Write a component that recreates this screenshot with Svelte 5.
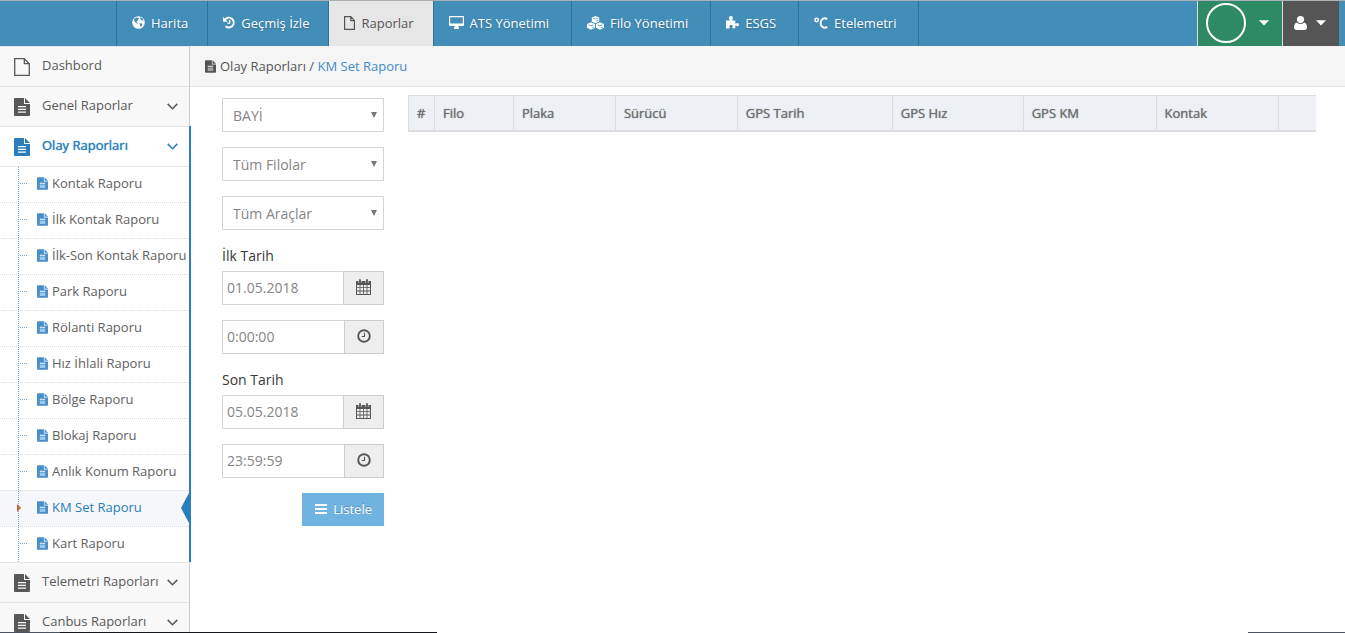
<script lang="ts">
  const navItems = [
    { icon: 'globe', label: 'Harita' },
    { icon: 'history', label: 'Geçmiş İzle' },
    { icon: 'file', label: 'Raporlar', active: true },
    { icon: 'desktop', label: 'ATS Yönetimi', wide: true },
    { icon: 'cubes', label: 'Filo Yönetimi', wide: true },
    { icon: 'puzzle', label: 'ESGS', wide: true },
    { icon: 'celsius', label: 'Etelemetri', wide: true },
  ];

  const reports = [
    'Kontak Raporu',
    'İlk Kontak Raporu',
    'İlk-Son Kontak Raporu',
    'Park Raporu',
    'Rölanti Raporu',
    'Hız İhlali Raporu',
    'Bölge Raporu',
    'Blokaj Raporu',
    'Anlık Konum Raporu',
    'KM Set Raporu',
    'Kart Raporu',
  ];
  const currentReport = 'KM Set Raporu';

  const columns = [
    { title: '#', weight: 26 },
    { title: 'Filo', weight: 79 },
    { title: 'Plaka', weight: 102 },
    { title: 'Sürücü', weight: 122 },
    { title: 'GPS Tarih', weight: 155 },
    { title: 'GPS Hız', weight: 131 },
    { title: 'GPS KM', weight: 133 },
    { title: 'Kontak', weight: 123 },
    { title: '', weight: 37 },
  ];
  const totalWeight = columns.reduce((sum, c) => sum + c.weight, 0);

  let startDate = $state('01.05.2018');
  let startTime = $state('0:00:00');
  let endDate = $state('05.05.2018');
  let endTime = $state('23:59:59');
</script>

{#snippet fileText()}
  <svg class="file-text" viewBox="0 0 16 18" aria-hidden="true">
    <path fill="currentColor" fill-rule="evenodd" d="M1 0h9v6h6v11a1 1 0 0 1-1 1H1a1 1 0 0 1-1-1V1a1 1 0 0 1 1-1zM4 8v1.300h8V8zM4 10.700V12h8v-1.300zM4 13.400v1.300h8v-1.300z" />
    <path fill="currentColor" d="M11 0l5 5h-5z" />
  </svg>
{/snippet}

{#snippet fileEmpty()}
  <svg class="file-empty" viewBox="0 0 16 18" fill="none" stroke="currentColor" stroke-width="1.300" aria-hidden="true">
    <path d="M.7.7h9.600l5 5v11.600H.7zM10.300.7v5h5" />
  </svg>
{/snippet}

{#snippet chevron()}
  <svg class="chevron" viewBox="0 0 11 7" fill="none" stroke="currentColor" stroke-width="1.500" aria-hidden="true">
    <path d="M.7.9l4.800 4.800L10.300.9" />
  </svg>
{/snippet}

{#snippet caret()}
  <svg class="caret" viewBox="0 0 10 6" aria-hidden="true"><path fill="currentColor" d="M0 .3h10L5 5.600z" /></svg>
{/snippet}

{#snippet calendar()}
  <svg class="calendar" viewBox="0 0 15 16" aria-hidden="true">
    <path fill="currentColor" fill-rule="evenodd" d="M0 2h15v14H0zM1 6v2.300h2.600V6zM4.400 6v2.300h2.700V6zM7.900 6v2.300h2.700V6zM11.400 6v2.300H14V6zM1 9.100v2.500h2.600V9.100zM4.400 9.100v2.500h2.700V9.100zM7.900 9.100v2.500h2.700V9.100zM11.400 9.100v2.500H14V9.100zM1 12.400V15h2.600v-2.600zM4.400 12.400V15h2.700v-2.600zM7.900 12.400V15h2.700v-2.600zM11.400 12.400V15H14v-2.600z" />
    <path d="M4 1v3M11 1v3" stroke="#eee" stroke-width="3" />
    <path d="M4 1v3M11 1v3" stroke="currentColor" stroke-width="1.800" stroke-linecap="round" />
  </svg>
{/snippet}

{#snippet clock()}
  <svg class="clock" viewBox="0 0 14 14" fill="none" stroke="currentColor" aria-hidden="true">
    <circle cx="7" cy="7" r="5.800" stroke-width="1.900" />
    <path d="M7.500 3.800v3.700H4.800" stroke-width="1.100" />
  </svg>
{/snippet}

{#snippet navIcon(name: string)}
  {#if name === 'globe'}
    <svg width="13" height="13" viewBox="0 0 13 13" aria-hidden="true">
      <circle cx="6.500" cy="6.500" r="6.300" fill="#fff" />
      <path fill="#438eb9" d="M2.200 2.700l2.300-1.200 1.700.3.800 1-1.100.6.500.9-1.400.6-.6 1.100.8.700 1 .4-.3.700-1.300-.5-1.500-1.300-.9-1.500zM8.200 1.200l2.200 1.100 1.300 2.200-.8.300-1.300-.6-.9-.8-.6-1zM7.300 7.600l1.900-.4 1.300.9-.6 1.500-1.200 1.300-.6-1.300z" />
    </svg>
  {:else if name === 'history'}
    <svg width="12" height="13" viewBox="0 0 12 13" fill="none" stroke="#fff" aria-hidden="true">
      <path d="M1.900 3.700A4.900 4.900 0 1 1 2.600 10.200" stroke-width="1.900" />
      <path fill="#fff" stroke="none" d="M0 .9v4.800h4.800z" />
      <path d="M6.700 4v3.200H4.400" stroke-width="1.200" />
    </svg>
  {:else if name === 'file'}
    <svg width="11" height="14" viewBox="0 0 11 14" fill="none" stroke="currentColor" stroke-width="1.200" aria-hidden="true">
      <path d="M.6.6h6.200l3.600 3.800v9H.6zM6.800.6v4h3.600" />
    </svg>
  {:else if name === 'desktop'}
    <svg width="15" height="13" viewBox="0 0 15 13" aria-hidden="true">
      <path fill="#fff" fill-rule="evenodd" d="M1 0h13a1 1 0 0 1 1 1v8a1 1 0 0 1-1 1H9.200l.8 2v1H5v-1l.8-2H1a1 1 0 0 1-1-1V1a1 1 0 0 1 1-1zM1.200 1.200v6.400h12.600V1.200z" />
    </svg>
  {:else if name === 'cubes'}
    <svg width="17" height="14" viewBox="0 0 17 14" aria-hidden="true">
      <path fill="#fff" d="M8.500 0l3.700 1.500v4L8.500 7.200 4.800 5.500v-4zM4 6.300l4 1.800v3.700L4 13.800 0 11.800V8.100zM13 6.300l4 1.800v3.700l-4 2-4-2V8.100z" />
      <path fill="none" stroke="#438eb9" stroke-width=".8" d="M6.200 2.200l2.300 1 2.300-1M9.300 5.300l2-1M1.600 8.800L4 9.900l2.400-1.100M4.900 12l2-1M10.600 8.800L13 9.900l2.400-1.100M13.900 12l2-1" />
    </svg>
  {:else if name === 'puzzle'}
    <svg width="13" height="13" viewBox="0 0 13 13" aria-hidden="true">
      <path fill="#fff" d="M0 4.500h3.700c.5-1-.7-1.300-.7-2.600a1.900 1.900 0 0 1 3.800 0c0 1.300-1 1.600-.6 2.600h3.100v3.200c.8.600 1-.7 2.100-.7a1.600 1.600 0 0 1 0 3.200c-1.100 0-1.300-1-2.100-.6v2.700H6.200c-.5-.9.500-1 .5-2s-.7-1.400-1.700-1.400-1.700.5-1.700 1.400.8 1.200.5 2L0 12.600z" />
    </svg>
  {:else}
    <svg width="14" height="12" viewBox="0 0 14 12" fill="none" stroke="#fff" aria-hidden="true">
      <circle cx="2.600" cy="3" r="1.700" stroke-width="1.500" />
      <path d="M13.300 2C9.600.1 6.600 2.500 6.600 6s3 5.900 6.700 4" stroke-width="2" />
    </svg>
  {/if}
{/snippet}

<div class="page">
  <header class="navbar">
    <nav class="nav" aria-label="Ana menü">
      {#each navItems as item}
        <a href="#{item.icon}" class="nav-link" class:active={item.active} class:wide={item.wide}>
          {@render navIcon(item.icon)}
          <span>{item.label}</span>
        </a>
      {/each}
    </nav>
    <div class="tools">
      <button class="company" aria-label="Firma">
        <span class="avatar"></span>
        {@render caret()}
      </button>
      <button class="user" aria-label="Kullanıcı">
        <svg width="13" height="14" viewBox="0 0 13 14" aria-hidden="true">
          <path fill="#fff" d="M6.500 0a3.600 3.600 0 0 1 3.600 3.600c0 2-1.600 3.700-3.600 3.700S2.900 5.600 2.900 3.600A3.600 3.600 0 0 1 6.500 0zM3 6.600c2 2 5 2 7 0 2 .3 3 2.400 3 4.900C13 13 12 14 10.600 14H2.400C1 14 0 13 0 11.500 0 9 1 6.900 3 6.600z" />
        </svg>
        {@render caret()}
      </button>
    </div>
  </header>

  <div class="body">
    <aside class="sidebar">
      <a href="#dashboard" class="menu-item">{@render fileEmpty()}<span>Dashbord</span></a>
      <a href="#genel" class="menu-item">{@render fileText()}<span>Genel Raporlar</span>{@render chevron()}</a>
      <div class="open-group">
        <a href="#olay" class="menu-item open">{@render fileText()}<span>Olay Raporları</span>{@render chevron()}</a>
        <ul class="submenu">
          {#each reports as report}
            <li class:current={report === currentReport}>
              <a href="#rapor">{@render fileText()}<span>{report}</span></a>
            </li>
          {/each}
        </ul>
      </div>
      <a href="#telemetri" class="menu-item">{@render fileText()}<span>Telemetri Raporları</span>{@render chevron()}</a>
      <a href="#canbus" class="menu-item">{@render fileText()}<span>Canbus Raporları</span>{@render chevron()}</a>
    </aside>

    <main>
      <div class="breadcrumb">
        {@render fileText()}
        <span>Olay Raporları / <a href="#km">KM Set Raporu</a></span>
      </div>

      <div class="content">
        <form class="filters">
          <div class="select">
            <select aria-label="Bayi"><option>BAYİ</option></select>
          </div>
          <div class="select">
            <select aria-label="Filo"><option>Tüm Filolar</option></select>
          </div>
          <div class="select">
            <select aria-label="Araç"><option>Tüm Araçlar</option></select>
          </div>

          <div class="field">
            <label for="start-date">İlk Tarih</label>
            <div class="input-group">
              <input id="start-date" type="text" bind:value={startDate} />
              <span class="addon">{@render calendar()}</span>
            </div>
          </div>
          <div class="input-group">
            <input type="text" aria-label="İlk saat" bind:value={startTime} />
            <span class="addon">{@render clock()}</span>
          </div>

          <div class="field">
            <label for="end-date">Son Tarih</label>
            <div class="input-group">
              <input id="end-date" type="text" bind:value={endDate} />
              <span class="addon">{@render calendar()}</span>
            </div>
          </div>
          <div class="input-group">
            <input type="text" aria-label="Son saat" bind:value={endTime} />
            <span class="addon">{@render clock()}</span>
          </div>

          <button type="button" class="submit">
            <svg width="12" height="10" viewBox="0 0 12 10" aria-hidden="true">
              <path fill="#fff" d="M0 0h12v2H0zM0 4h12v2H0zM0 8h12v2H0z" />
            </svg>
            Listele
          </button>
        </form>

        <table>
          <colgroup>
            {#each columns as col}
              <col style="width: {(col.weight / totalWeight) * 100}%" />
            {/each}
          </colgroup>
          <thead>
            <tr>
              {#each columns as col}
                <th>{col.title}</th>
              {/each}
            </tr>
          </thead>
        </table>
      </div>
    </main>
  </div>
</div>

<style>
  :global(body) {
    background: #fff;
    color: #393939;
    font-family: 'Open Sans', 'Noto Sans', sans-serif;
    font-size: 13px;
    line-height: 20px;
  }

  a {
    text-decoration: none;
  }

  svg {
    flex: none;
    display: block;
  }

  .page {
    position: relative;
    display: flex;
    flex-direction: column;
    height: 100vh;
    overflow: hidden;
  }

  /* dark hairlines along the bottom edge */
  .page::before,
  .page::after {
    content: '';
    position: absolute;
    z-index: 3;
    bottom: 0;
    height: 1px;
  }

  .page::before {
    left: 0;
    width: 437px;
    background: linear-gradient(to right, #4a525e 60px, #15151c 60px);
  }

  .page::after {
    right: 0;
    width: 97px;
    background: #4a525e;
  }

  /* top bar */
  .navbar {
    display: flex;
    justify-content: space-between;
    flex: none;
    height: 45px;
    padding: 0 6px 0 116px;
    border-top: 1px solid #a9b0b6;
    background: #438eb9;
  }

  .nav {
    display: flex;
    border-right: 1px solid #2c7299;
  }

  .nav-link {
    display: flex;
    align-items: center;
    gap: 6px;
    padding: 0 19px 2px 15px;
    border-left: 1px solid #2c7299;
    color: #fff;
    text-shadow: 0 1px 2px rgba(0, 0, 0, 0.3);
    white-space: nowrap;
  }

  .nav-link.wide {
    padding-right: 22px;
  }

  .nav-link.active {
    background: #e6e6e6;
    color: #555;
    text-shadow: none;
  }

  .tools {
    display: flex;
  }

  .tools button {
    display: flex;
    align-items: center;
    border: 0;
    border-left: 1px solid #ddd;
    color: #fff;
  }

  .tools .company {
    gap: 13px;
    padding: 0 13px 2px 8px;
    background: #2e8965;
  }

  .tools .user {
    gap: 9px;
    padding: 0 13px 2px 11px;
    background: #555;
  }

  .avatar {
    box-sizing: border-box;
    width: 40px;
    height: 40px;
    border: 2px solid #fff;
    border-radius: 50%;
  }

  .caret {
    width: 10px;
    height: 6px;
  }

  /* sidebar */
  .body {
    display: flex;
    flex: 1;
    min-height: 0;
  }

  .sidebar {
    flex: none;
    width: 189px;
    border-right: 1px solid #ccc;
    background: #f2f2f2;
  }

  .menu-item {
    display: flex;
    align-items: center;
    gap: 12px;
    height: 39px;
    padding: 0 11px 0 14px;
    border-top: 1px solid #e5e5e5;
    background: #f8f8f8;
    color: #585858;
    white-space: nowrap;
  }

  .menu-item span {
    flex: 1;
    min-width: 0;
    padding-bottom: 4px;
  }

  .menu-item .file-text,
  .menu-item .file-empty {
    width: 16px;
    height: 18px;
  }

  .menu-item.open {
    background: #fff;
    color: #2b7dbc;
    text-shadow: 0 0 1px currentColor;
  }

  .chevron {
    width: 11px;
    height: 7px;
  }

  .open-group {
    position: relative;
  }

  /* blue edge drawn over the sidebar border */
  .open-group::after {
    content: '';
    position: absolute;
    top: 0;
    right: -2px;
    bottom: 0;
    width: 2px;
    background: #2b7dbc;
  }

  .submenu {
    position: relative;
    margin: 0;
    padding: 0;
    border-top: 1px solid #e5e5e5;
    background: #fff;
    list-style: none;
  }

  .submenu::before {
    content: '';
    position: absolute;
    z-index: 1;
    top: 0;
    bottom: 0;
    left: 18px;
    border-left: 1px dotted #7fa8c9;
  }

  .submenu li {
    position: relative;
    border-top: 1px dotted #ddd;
  }

  .submenu li:first-child {
    border-top: 0;
  }

  .submenu li::before {
    content: '';
    position: absolute;
    top: 16px;
    left: 20px;
    width: 7px;
    border-top: 1px dotted #7fa8c9;
  }

  .submenu a {
    display: flex;
    align-items: center;
    gap: 4px;
    height: 33px;
    padding: 0 0 2px 37px;
    color: #616161;
    white-space: nowrap;
  }

  .submenu span {
    padding-bottom: 2px;
  }

  .submenu .file-text {
    width: 11px;
    height: 13px;
    color: #478fca;
  }

  .submenu .current {
    background: #f5f7fa;
  }

  .submenu .current a {
    color: #2b7dbc;
  }

  .submenu .current::before {
    z-index: 2;
    top: 13px;
    left: 17px;
    width: 0;
    border: 4px solid transparent;
    border-right: 0;
    border-left: 4px solid #c86139;
  }

  .submenu .current::after {
    content: '';
    position: absolute;
    top: 2px;
    right: 0;
    border: 15px solid transparent;
    border-right: 8px solid #2b7dbc;
    border-left: 0;
  }

  /* main area */
  main {
    flex: 1;
    min-width: 0;
  }

  .breadcrumb {
    display: flex;
    align-items: center;
    gap: 4px;
    height: 40px;
    padding: 0 15px;
    border-bottom: 1px solid #e5e5e5;
    background: #f5f5f5;
    color: #555;
  }

  .breadcrumb .file-text {
    width: 11px;
    height: 13px;
  }

  .breadcrumb a {
    color: #428bca;
  }

  .content {
    display: flex;
    align-items: flex-start;
    gap: 24px;
    padding: 8px 29px 0 32px;
  }

  .filters {
    display: flex;
    flex: none;
    flex-direction: column;
    gap: 15px;
    width: 162px;
    padding-top: 3px;
  }

  .select {
    position: relative;
  }

  .select::after {
    content: '';
    position: absolute;
    top: 14px;
    right: 7px;
    border: 3px solid transparent;
    border-top: 6px solid #777;
    border-bottom: 0;
    pointer-events: none;
  }

  select,
  input {
    box-sizing: border-box;
    height: 34px;
    margin: 0;
    border: 1px solid #d5d5d5;
    border-radius: 0;
    background: #fff;
    color: #858585;
    font-family: inherit;
    font-size: 14px;
  }

  select {
    display: block;
    width: 100%;
    padding: 0 20px 0 10px;
    appearance: none;
  }

  label {
    display: block;
    margin-bottom: 5px;
    font-size: 14px;
    line-height: 21px;
  }

  .input-group {
    display: flex;
  }

  .input-group input {
    flex: 1;
    min-width: 0;
    padding: 0 4px 2px;
    border-right: 0;
  }

  .addon {
    display: flex;
    align-items: center;
    height: 30px;
    padding: 0 12px 2px;
    border: 1px solid #ccc;
    background: #eee;
    color: #555;
  }

  .calendar {
    width: 15px;
    height: 16px;
  }

  .clock {
    width: 14px;
    height: 14px;
  }

  .submit {
    display: flex;
    align-items: center;
    align-self: flex-end;
    gap: 6px;
    height: 33px;
    padding: 0 12px 2px 13px;
    border: 0;
    background: #6fb3e0;
    color: #fff;
    font-family: inherit;
    font-size: 13px;
    text-shadow: 0 -1px 0 rgba(0, 0, 0, 0.25);
  }

  table {
    flex: 1;
    min-width: 0;
    border-collapse: collapse;
    table-layout: fixed;
  }

  th {
    box-sizing: border-box;
    height: 35px;
    padding: 0 8px;
    border: 1px solid #ddd;
    border-right: 0;
    border-bottom: 2px solid #ddd;
    background: #edf1f5;
    color: #707070;
    font-size: 13px;
    font-weight: normal;
    text-align: left;
    text-shadow: 0 0 1px currentColor;
    white-space: nowrap;
  }
</style>
